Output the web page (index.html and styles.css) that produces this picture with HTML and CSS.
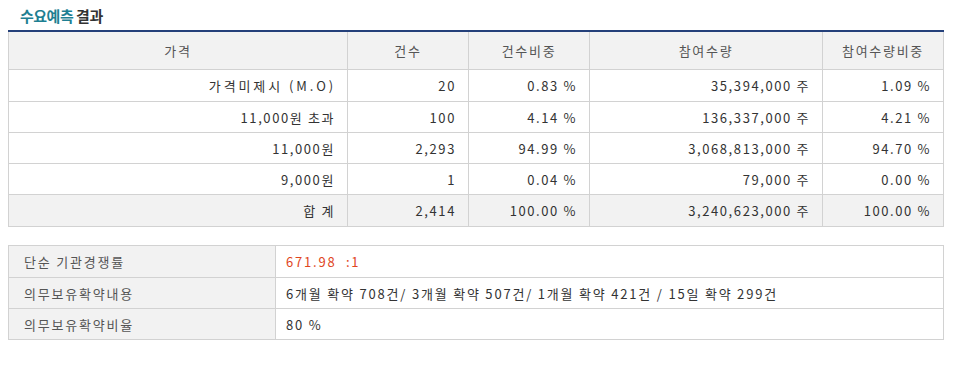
FILE: index.html
```html
<!DOCTYPE html>
<html>
	<head>
		<meta charset="UTF-8">
		<title>수요예측 결과</title>
		<link rel="stylesheet" href="styles.css">
	</head>
	<body>
		<div class="titulo"><span class="resaltado">수요예측</span> 결과</div>
		<table class="tablaResultado">
			<tr>
				<th class="colPrecio">가격</th>
				<th class="colNum">건수</th>
				<th class="colNum">건수비중</th>
				<th class="colCant">참여수량</th>
				<th class="colNum">참여수량비중</th>
			</tr>
			<tr class="primera">
				<td class="ancho">가격미제시 (M.O)</td>
				<td>20</td>
				<td>0.83 %</td>
				<td>35,394,000 주</td>
				<td>1.09 %</td>
			</tr>
			<tr>
				<td>11,000원 초과</td>
				<td>100</td>
				<td>4.14 %</td>
				<td>136,337,000 주</td>
				<td>4.21 %</td>
			</tr>
			<tr>
				<td>11,000원</td>
				<td>2,293</td>
				<td>94.99 %</td>
				<td>3,068,813,000 주</td>
				<td>94.70 %</td>
			</tr>
			<tr>
				<td>9,000원</td>
				<td>1</td>
				<td>0.04 %</td>
				<td>79,000 주</td>
				<td>0.00 %</td>
			</tr>
			<tr class="total">
				<td>합 계</td>
				<td>2,414</td>
				<td>100.00 %</td>
				<td>3,240,623,000 주</td>
				<td>100.00 %</td>
			</tr>
		</table>

		<table class="tablaInfo">
			<tr class="primera">
				<th>단순 기관경쟁률</th>
				<td class="rojo">671.98&nbsp; :1</td>
			</tr>
			<tr>
				<th>의무보유확약내용</th>
				<td>6개월 확약 708건/ 3개월 확약 507건/ 1개월 확약 421건 / 15일 확약 299건</td>
			</tr>
			<tr>
				<th>의무보유확약비율</th>
				<td>80 %</td>
			</tr>
		</table>
	</body>
</html>
```

FILE: styles.css
```css
body {
	margin: 0;
	padding: 0 8px;
	font-family: "Noto Sans CJK KR", "DejaVu Sans", sans-serif;
	font-size: 13px;
	color: #333;
	background: #fff;
}
.titulo {
	height: 30px;
	line-height: 32px;
	padding-left: 12px;
	font-size: 15px;
	font-weight: bold;
	color: #333;
	letter-spacing: -0.5px;
}
.titulo .resaltado {
	color: #1e7f92;
}
table {
	border-collapse: collapse;
	width: 936px;
	table-layout: fixed;
}
table.tablaResultado {
	border-top: 2px solid #24407a;
}
table.tablaResultado th {
	height: 37px;
	background: #f2f2f2;
	border: 1px solid #d2d2d2;
	border-top: 1px solid #c4c4c4;
	font-weight: normal;
	color: #555;
	letter-spacing: 1.7px;
	padding: 0;
}
th.colPrecio { width: 338px; }
th.colNum { width: 120px; }
th.colCant { width: 232px; }
table.tablaResultado td {
	height: 30px;
	border: 1px solid #d2d2d2;
	text-align: right;
	padding: 0 12px;
	letter-spacing: 1.6px;
	color: #333;
}
table.tablaResultado tr.primera td {
	height: 31px;
}
table.tablaResultado td.ancho {
	letter-spacing: 2.9px;
	padding-right: 11px;
}
table.tablaResultado tr.total td {
	background: #f2f2f2;
	height: 31px;
}
table.tablaInfo {
	margin-top: 18px;
}
table.tablaInfo th {
	width: 251px;
	height: 30px;
	background: #f2f2f2;
	border: 1px solid #d2d2d2;
	text-align: left;
	font-weight: normal;
	padding: 0 0 0 15px;
	color: #555;
	letter-spacing: 1.8px;
}
table.tablaInfo td {
	height: 30px;
	border: 1px solid #d2d2d2;
	padding: 0 0 0 10px;
	color: #333;
	letter-spacing: 1.8px;
}
table.tablaInfo tr.primera th,
table.tablaInfo tr.primera td {
	height: 31px;
}
table.tablaInfo td.rojo {
	color: #e0461e;
	letter-spacing: 1.8px;
}
```
